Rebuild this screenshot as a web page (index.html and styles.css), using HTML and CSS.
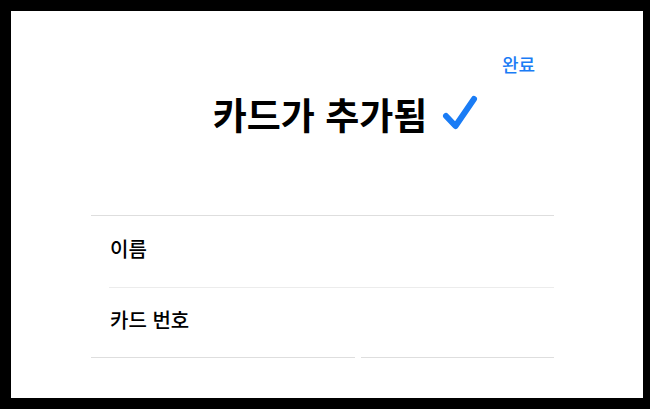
FILE: index.html
```html
<!DOCTYPE html>
<html lang="ko">
<head>
    <meta charset="UTF-8">
    <title>카드가 추가됨</title>
    <link rel="stylesheet" href="styles.css">
</head>
<body>
    <div class="panel">
        <div class="top-bar">
            <span class="done">완료</span>
        </div>
        <div class="title">
            <h1>카드가 추가됨</h1>
            <svg class="check" width="36" height="36" viewBox="0 0 36 36">
                <path d="M4 21 L13.5 31 L32 4" fill="none" stroke="#1a7cf5" stroke-width="6" stroke-linecap="round" stroke-linejoin="round"/>
            </svg>
        </div>
        <div class="card-form">
            <div class="field">이름</div>
            <div class="field inset">카드 번호</div>
            <div class="split">
                <div class="half wide"></div>
                <div class="half"></div>
            </div>
        </div>
    </div>
</body>
</html>
```

FILE: styles.css
```css
body {
    margin: 0;
    background-color: #000;
    font-family: "Noto Sans CJK KR", "Noto Sans", sans-serif;
}

.panel {
    width: 632px;
    height: 387px;
    margin: 11px 0 0 11px;
    background-color: #fff;
    overflow: hidden;
}

.top-bar {
    display: flex;
    justify-content: flex-end;
    padding: 42px 108px 0 0;
}

.done {
    color: #1a7cf5;
    font-size: 18px;
    font-weight: 500;
    line-height: 22px;
}

.title {
    display: flex;
    justify-content: center;
    align-items: center;
    gap: 15px;
    margin-top: 17px;
    padding-left: 37px;
}

.title h1 {
    margin: 0;
    font-size: 37px;
    font-weight: 700;
    line-height: 44px;
    color: #000;
}

.check {
    display: block;
    margin-top: -2px;
}

.card-form {
    margin: 79px 89px 0 80px;
    border-top: 1px solid #dedede;
}

.field {
    height: 65px;
    padding: 0 0 6px 19px;
    display: flex;
    align-items: center;
    font-size: 20px;
    font-weight: 500;
    color: #000;
}

.field.inset {
    height: 63px;
    margin-left: 18px;
    padding-left: 1px;
    border-top: 1px solid #ececec;
}

.split {
    display: flex;
    gap: 6px;
}

.half {
    flex: 193;
    height: 40px;
    border-top: 1px solid #dedede;
}

.half.wide {
    flex: 263;
}
```
